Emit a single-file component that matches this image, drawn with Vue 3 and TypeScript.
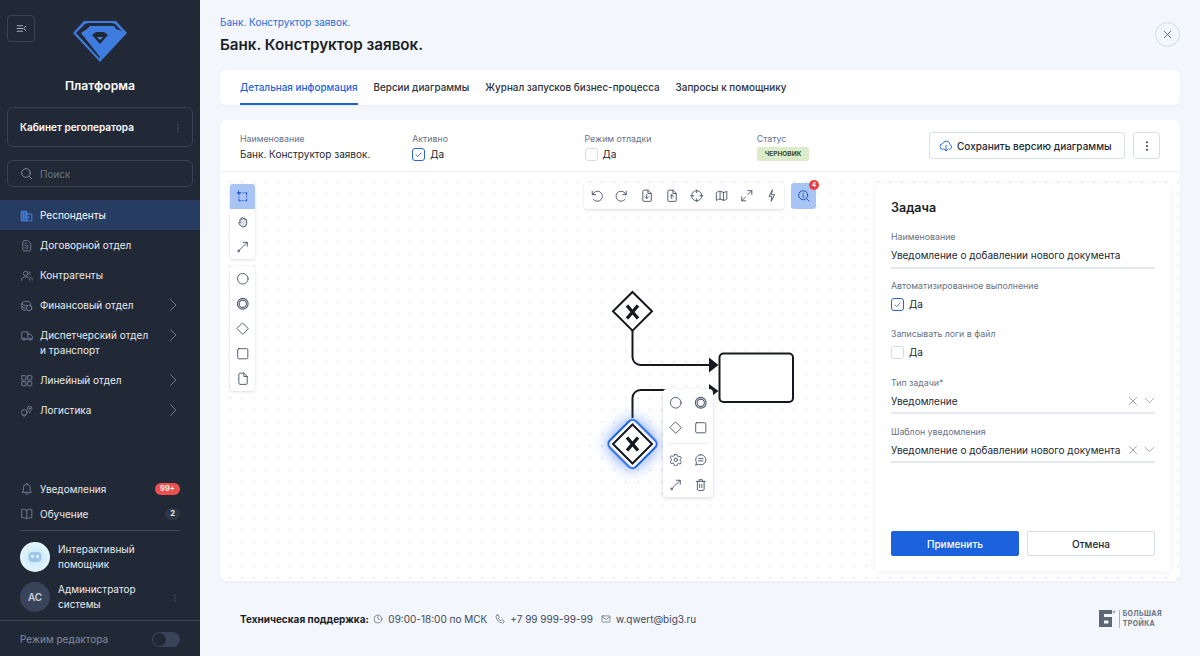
<template>
  <div class="app">
    <aside class="sidebar">
      <div class="brand">
        <button class="collapse">
          <svg class="ico" viewBox="0 0 24 24" v-html="icons.collapse"></svg>
        </button>
        <svg class="logo" viewBox="0 0 54 41">
          <path d="M0 12 11 0h32l11 12-27 29z" fill="#3f7ce0" />
          <path d="M3 12 12 3l3-1h24l3 1 7 7-6-2-2-3H17l-3 3-6 4 19 24-1 1z" fill="#222936" />
          <path d="M19 14l4-3h8l4 3-8 9z" fill="#222936" />
          <path d="M24 16h6l-3 3z" fill="#4a86e8" />
        </svg>
        <div class="brand-name">Платформа</div>
      </div>

      <div class="cabinet">
        <span>Кабинет регоператора</span>
        <svg class="ico dots" viewBox="0 0 24 24" v-html="icons.dots"></svg>
      </div>

      <div class="search">
        <svg class="ico" viewBox="0 0 24 24" v-html="icons.search"></svg>
        <span>Поиск</span>
      </div>

      <nav class="nav">
        <div v-for="item in navItems" :key="item.label" :class="['nav-item', { active: item.active }]">
          <svg class="ico" viewBox="0 0 24 24" v-html="icons[item.icon]"></svg>
          <span class="nav-label">{{ item.label }}</span>
          <svg v-if="item.arrow" class="ico chevron" viewBox="0 0 24 24" v-html="icons.chevron"></svg>
        </div>
      </nav>

      <div class="side-bottom">
        <div class="side-link">
          <svg class="ico" viewBox="0 0 24 24" v-html="icons.bell"></svg>
          <span>Уведомления</span>
          <b class="count red">99+</b>
        </div>
        <div class="side-link">
          <svg class="ico" viewBox="0 0 24 24" v-html="icons.book"></svg>
          <span>Обучение</span>
          <b class="count">2</b>
        </div>
        <div class="side-divider"></div>
        <div class="person">
          <div class="avatar helper">
            <svg viewBox="0 0 30 30" width="30" height="30">
              <rect x="8.5" y="10" width="13" height="10" rx="4" fill="#9fc6e6" />
              <circle cx="12.5" cy="14.5" r="1.4" fill="#eef8fd" />
              <circle cx="17.5" cy="14.5" r="1.4" fill="#eef8fd" />
            </svg>
          </div>
          <span>Интерактивный<br />помощник</span>
        </div>
        <div class="person">
          <div class="avatar">АС</div>
          <span>Администратор<br />системы</span>
          <svg class="ico dots" viewBox="0 0 24 24" v-html="icons.dots"></svg>
        </div>
      </div>

      <div class="editor-mode">
        <span>Режим редактора</span>
        <div class="switch"><i></i></div>
      </div>
    </aside>

    <main class="main">
      <header class="page-head">
        <div>
          <div class="crumb">Банк. Конструктор заявок.</div>
          <h1>Банк. Конструктор заявок.</h1>
        </div>
        <button class="close">
          <svg class="ico" viewBox="0 0 24 24" v-html="icons.close"></svg>
        </button>
      </header>

      <div class="tabs">
        <div v-for="(tab, i) in tabs" :key="tab" :class="['tab', { current: i === 0 }]">{{ tab }}</div>
      </div>

      <section class="card">
        <div class="info-row">
          <div class="field">
            <label>Наименование</label>
            <div class="value">Банк. Конструктор заявок.</div>
          </div>
          <div class="field">
            <label>Активно</label>
            <div class="value check"><i class="box on"><svg viewBox="0 0 14 14"><path d="M3.5 7.2 6 9.6l4.6-5" /></svg></i>Да</div>
          </div>
          <div class="field">
            <label>Режим отладки</label>
            <div class="value check"><i class="box"></i>Да</div>
          </div>
          <div class="field">
            <label>Статус</label>
            <div class="status">ЧЕРНОВИК</div>
          </div>
          <div class="info-actions">
            <button class="btn-save">
              <svg class="ico cloud" viewBox="0 0 24 24" v-html="icons.cloud"></svg>
              Сохранить версию диаграммы
            </button>
            <button class="btn-more">
              <svg class="ico" viewBox="0 0 24 24" v-html="icons.dotsDark"></svg>
            </button>
          </div>
        </div>

        <div class="canvas">
          <svg class="diagram" viewBox="220 172 960 409">
            <g fill="none" stroke="#15191f" stroke-width="2">
              <path d="M632.5 292 652 311.3 632.5 330.6 613 311.3z" fill="#fff" />
              <path d="M632.5 331V357a8 8 0 0 0 8 8H710" />
              <rect x="719.5" y="353.5" width="73.5" height="48.5" rx="4" fill="#fff" />
              <path d="M632.5 418V398a8 8 0 0 1 8-8H710" />
            </g>
            <path d="M627 305.5 638 318.5M638 305.5 627 318.5" stroke="#15191f" stroke-width="3.4" fill="none" />
            <path d="M709 357.5 718.5 365 709 372.5z" fill="#15191f" />
            <path d="M709 384 718.5 391 709 398z" fill="#15191f" />
            <rect class="selected" x="614" y="425.5" width="37" height="37" rx="5" transform="rotate(45 632.5 444)" />
            <path d="M632.5 424.5 652 444 632.5 463.5 613 444z" fill="#fff" stroke="#15191f" stroke-width="2" />
            <path d="M627 437.5 638 450.5M638 437.5 627 450.5" stroke="#15191f" stroke-width="3.4" fill="none" />
          </svg>

          <div class="tool-col">
            <div class="tool-group">
              <button v-for="(t, i) in toolsTop" :key="t" :class="['tool', { picked: i === 0 }]">
                <svg class="ico" viewBox="0 0 24 24" v-html="icons[t]"></svg>
              </button>
            </div>
            <div class="tool-group">
              <button v-for="t in toolsShapes" :key="t" class="tool">
                <svg class="ico" viewBox="0 0 24 24" v-html="icons[t]"></svg>
              </button>
            </div>
          </div>

          <div class="top-tools">
            <div class="tool-group row">
              <button v-for="t in toolsRow" :key="t" class="tool">
                <svg class="ico" viewBox="0 0 24 24" v-html="icons[t]"></svg>
              </button>
            </div>
            <button class="tool assistant">
              <svg class="ico" viewBox="0 0 24 24" v-html="icons.inspect"></svg>
              <b>4</b>
            </button>
          </div>

          <div class="context-menu">
            <button v-for="t in menuTop" :key="t" class="tool">
              <svg class="ico" viewBox="0 0 24 24" v-html="icons[t]"></svg>
            </button>
            <div class="menu-divider"></div>
            <button v-for="t in menuBottom" :key="t" class="tool">
              <svg class="ico" viewBox="0 0 24 24" v-html="icons[t]"></svg>
            </button>
          </div>

          <aside class="task">
            <h2>Задача</h2>
            <div class="task-field first">
              <label>Наименование</label>
              <div class="line">Уведомление о добавлении нового документа</div>
            </div>
            <div class="task-check">
              <label>Автоматизированное выполнение</label>
              <div class="value check"><i class="box on"><svg viewBox="0 0 14 14"><path d="M3.5 7.2 6 9.6l4.6-5" /></svg></i>Да</div>
            </div>
            <div class="task-check">
              <label>Записывать логи в файл</label>
              <div class="value check"><i class="box"></i>Да</div>
            </div>
            <div class="task-field select">
              <label>Тип задачи*</label>
              <div class="line">
                <span>Уведомление</span>
                <svg class="ico clear" viewBox="0 0 24 24" v-html="icons.close"></svg>
                <svg class="ico open" viewBox="0 0 24 24" v-html="icons.down"></svg>
              </div>
            </div>
            <div class="task-field select">
              <label>Шаблон уведомления</label>
              <div class="line">
                <span>Уведомление о добавлении нового документа</span>
                <svg class="ico clear" viewBox="0 0 24 24" v-html="icons.close"></svg>
                <svg class="ico open" viewBox="0 0 24 24" v-html="icons.down"></svg>
              </div>
            </div>
            <div class="task-actions">
              <button class="apply">Применить</button>
              <button class="cancel">Отмена</button>
            </div>
          </aside>
        </div>
      </section>

      <footer class="footer">
        <strong>Техническая поддержка:</strong>
        <span class="contact"><svg class="ico" viewBox="0 0 24 24" v-html="icons.clock"></svg>09:00-18:00 по МСК</span>
        <span class="contact"><svg class="ico" viewBox="0 0 24 24" v-html="icons.phone"></svg>+7 99 999-99-99</span>
        <span class="contact"><svg class="ico" viewBox="0 0 24 24" v-html="icons.mail"></svg>w.qwert@big3.ru</span>
        <div class="company">
          <svg viewBox="0 0 17 17" width="17" height="17">
            <path d="M0 0h13v4H5v3h8v10H0z" fill="#5d6675" />
            <path d="M5 10.5h4.5v3H5z" fill="#f3f6fa" />
            <circle cx="15" cy="1.8" r="1.5" fill="#aab2bd" />
          </svg>
          <i></i>
          <span>БОЛЬШАЯ<br />ТРОЙКА</span>
        </div>
      </footer>
    </main>
  </div>
</template>

<script setup lang="ts">
interface NavItem {
  label: string
  icon: string
  active?: boolean
  arrow?: boolean
}

const navItems: NavItem[] = [
  { label: 'Респонденты', icon: 'building', active: true },
  { label: 'Договорной отдел', icon: 'doc' },
  { label: 'Контрагенты', icon: 'users' },
  { label: 'Финансовый отдел', icon: 'finance', arrow: true },
  { label: 'Диспетчерский отдел и транспорт', icon: 'truck', arrow: true },
  { label: 'Линейный отдел', icon: 'grid', arrow: true },
  { label: 'Логистика', icon: 'route', arrow: true }
]

const tabs = ['Детальная информация', 'Версии диаграммы', 'Журнал запусков бизнес-процесса', 'Запросы к помощнику']

const toolsTop = ['select', 'hand', 'connect']
const toolsShapes = ['circle', 'ring', 'diamond', 'square', 'page']
const toolsRow = ['undo', 'redo', 'fileIn', 'fileOut', 'target', 'map', 'expand', 'bolt']
const menuTop = ['circle', 'ring', 'diamond', 'square']
const menuBottom = ['gear', 'chat', 'connect', 'trash']

const icons: Record<string, string> = {
  collapse: '<path d="M4 7h10M4 12h10M4 17h10M20 8l-4 4 4 4"/>',
  dots: '<circle cx="12" cy="6" r="1.2" fill="currentColor"/><circle cx="12" cy="12" r="1.2" fill="currentColor"/><circle cx="12" cy="18" r="1.2" fill="currentColor"/>',
  dotsDark: '<circle cx="12" cy="5.5" r="1.6" fill="currentColor"/><circle cx="12" cy="12" r="1.6" fill="currentColor"/><circle cx="12" cy="18.5" r="1.6" fill="currentColor"/>',
  search: '<circle cx="11" cy="11" r="8"/><path d="M17 17l4.5 4.5"/>',
  building: '<path d="M3 21V4h9v17M12 9h9v12H3M6 8v9M9 8v9M15.5 13v4"/><path d="M3 5h9v15H3z" fill="currentColor" fill-opacity=".35"/>',
  doc: '<path d="M5 5a2 2 0 0 1 2-2h7l5 5v11a2 2 0 0 1-2 2H7a2 2 0 0 1-2-2zM9 12h6M9 16h6M9 8h2"/>',
  users: '<circle cx="10" cy="8" r="4"/><path d="M2.5 20c0-4 3-6 7.5-6s7.5 2 7.5 6M16 4.5a4 4 0 0 1 0 7M19 14.5c1.8.8 2.8 2.5 2.8 5"/>',
  finance: '<path d="M3 8c0-2 4-4 8-4s8 2 8 4v3M3 8v9c0 1.5 3 3 7 3M3 8c0 2 4 3.5 8 3.5M3 13c0 1.5 3 3 6 3"/><circle cx="16" cy="16" r="5"/>',
  truck: '<path d="M5 18H3V7a2 2 0 0 1 2-2h9v13H9M14 9h4l4 4v5h-2M15 18h1"/><circle cx="7" cy="18" r="2"/><circle cx="18" cy="18" r="2"/>',
  grid: '<rect x="3" y="3" width="7.5" height="7.5" rx="1"/><rect x="13.5" y="3" width="7.5" height="7.5" rx="1"/><rect x="3" y="13.5" width="7.5" height="7.5" rx="1"/><rect x="13.5" y="13.5" width="7.5" height="7.5" rx="1"/>',
  route: '<path d="M17 15c-2.5-3-4-5-4-7a4 4 0 0 1 8 0c0 2-1.5 4-4 7z"/><circle cx="17" cy="8" r="1"/><circle cx="7.5" cy="15" r="5"/><path d="M4.5 19.5 7.5 22l3-2.5"/>',
  chevron: '<path d="M8 3l9 9-9 9"/>',
  bell: '<path d="M6 16V10a6 6 0 0 1 12 0v6l2 2.5H4zM10 21.5h4M12 2.5V4"/>',
  book: '<path d="M12 6c-2-1.5-5-2-9-2v15c4 0 7 .5 9 2 2-1.5 5-2 9-2V4c-4 0-7 .5-9 2zM12 6v15"/>',
  close: '<path d="M6 6l12 12M18 6 6 18"/>',
  down: '<path d="M4 8l8 8 8-8"/>',
  cloud: '<path d="M7 18a5 5 0 0 1-.5-10 6.5 6.5 0 0 1 12.500 1.500 4.500 4.500 0 0 1-1 8.500"/><path d="M12 11v9M8.500 17l3.500 3.500 3.500-3.500"/>',
  select: '<path d="M5 8V5h3M16 5h3v3M19 16v3h-3M8 19H5v-3M12 5h1M5 12v1M19 11v1M11 19h1M2 5h6M5 2v6"/>',
  hand: '<path d="M7 13V8a1.500 1.500 0 0 1 3 0V6a1.500 1.500 0 0 1 3 0v1a1.500 1.500 0 0 1 3 0v2a1.500 1.500 0 0 1 3 0v6a6 6 0 0 1-6 6h-1c-3 0-4-2-7-6a1.500 1.500 0 0 1 2-2z" fill="currentColor" fill-opacity=".18"/>',
  connect: '<path d="M5.500 18.500 20 4M13 4h7v7"/><circle cx="4.500" cy="19.500" r="1.500"/>',
  circle: '<circle cx="12" cy="12" r="9.5"/>',
  ring: '<circle cx="12" cy="12" r="9.5" stroke-width="2"/><circle cx="12" cy="12" r="6.5" stroke-width="2"/>',
  diamond: '<path d="M12 2l10 10-10 10L2 12z"/>',
  square: '<rect x="3" y="3" width="18" height="18" rx="2"/>',
  page: '<path d="M5 4a2 2 0 0 1 2-2h7l6 6v12a2 2 0 0 1-2 2H7a2 2 0 0 1-2-2z"/><path d="M14 2v6h6"/>',
  undo: '<path d="M4 4v6h6"/><path d="M4.500 10A9 9 0 1 1 6 18.500"/>',
  redo: '<path d="M20 4v6h-6"/><path d="M19.500 10A9 9 0 1 0 18 18.500"/>',
  fileIn: '<path d="M5 4a2 2 0 0 1 2-2h7l6 6v12a2 2 0 0 1-2 2H7a2 2 0 0 1-2-2zM14 2v6h6M12 10v7M9 14l3 3 3-3"/>',
  fileOut: '<path d="M5 4a2 2 0 0 1 2-2h7l6 6v12a2 2 0 0 1-2 2H7a2 2 0 0 1-2-2zM14 2v6h6M12 17v-7M9 13l3-3 3 3"/>',
  target: '<circle cx="12" cy="12" r="9"/><path d="M12 1.500v5M12 17.500v5M1.500 12h5M17.500 12h5"/>',
  map: '<path d="M3 6c2-1.500 4-2 6-2l6 2c2 0 4-.5 6-2v14c-2 1.500-4 2-6 2l-6-2c-2 0-4 .5-6 2zM9 4v14M15 6v14"/>',
  expand: '<path d="M14 3h7v7M21 3l-7 7M10 21H3v-7M3 21l7-7"/>',
  bolt: '<path d="M13 2 7 13h5l-1 9 6-12h-5z"/>',
  inspect: '<circle cx="11" cy="11" r="8"/><path d="M17 17l4.500 4.500M11 10.500V15M11 7.500v.5"/>',
  gear: '<circle cx="12" cy="12" r="3"/><path d="M10 2.500h4l.7 3 2.300 1.300 3-.9 2 3.500-2.200 2.100v2.600l2.200 2.100-2 3.500-3-.9-2.300 1.300-.7 3h-4l-.7-3L7 17.900l-3 .9-2-3.500 2.200-2.100v-2.600L2 8.500l2-3.500 3 .9 2.300-1.300z"/>',
  chat: '<path d="M12 3a9 9 0 1 1-4 17l-5 1.500L4.500 17A9 9 0 0 1 12 3zM8 10h8M8 14h8"/>',
  trash: '<path d="M4 6h16M9 6V3h6v3M6 6v14a2 2 0 0 0 2 2h8a2 2 0 0 0 2-2V6M10 11v6M14 11v6"/>',
  clock: '<circle cx="12" cy="12" r="9.5"/><path d="M12 6v6l4 2"/>',
  phone: '<path d="M5 2.500 8.500 3l1.500 5-2 2c1.200 2.800 3.200 4.800 6 6l2-2 5 1.500.5 3.500c-.5 1.500-2 2.500-3.500 2.500C9.500 21 3 14.500 2.500 6 2.500 4.500 3.500 3 5 2.500z"/>',
  mail: '<rect x="2.5" y="4.5" width="19" height="15" rx="2"/><path d="M3 7l9 6 9-6"/>'
}
</script>

<style scoped>
.app {
  display: grid;
  grid-template-columns: 200px 1fr;
  height: 656px;
  overflow: hidden;
  background: #f3f6fa;
  font-family: Inter, "Noto Sans", sans-serif;
  color: #1f2530;
}

button {
  font-family: inherit;
  cursor: pointer;
}

.ico {
  display: block;
  width: 16px;
  height: 16px;
  fill: none;
  stroke: currentColor;
  stroke-width: 1.6;
  stroke-linecap: round;
  stroke-linejoin: round;
  flex-shrink: 0;
}

/* sidebar */
.sidebar {
  display: flex;
  flex-direction: column;
  background: #222936;
  color: #fff;
  height: 656px;
}

.brand {
  position: relative;
  display: flex;
  flex-direction: column;
  align-items: center;
  padding-top: 21px;
  height: 107px;
  box-sizing: border-box;
}

.collapse {
  position: absolute;
  left: 7px;
  top: 15px;
  width: 28px;
  height: 27px;
  padding: 0;
  display: flex;
  align-items: center;
  justify-content: center;
  background: transparent;
  border: 1px solid #3a4353;
  border-radius: 4px;
  color: #c3cad6;
}

.collapse .ico {
  width: 13px;
  height: 13px;
}

.logo {
  width: 54px;
  height: 41px;
}

.brand-name {
  margin-top: 16px;
  font-size: 12.2px;
  line-height: 16px;
  font-weight: 600;
}

.cabinet {
  display: flex;
  align-items: center;
  justify-content: space-between;
  margin: 0 7px;
  height: 40px;
  padding: 0 8px 0 12px;
  box-sizing: border-box;
  border: 1px solid #3a4353;
  border-radius: 6px;
  font-size: 10px;
  font-weight: 600;
}

.cabinet .dots,
.person .dots {
  width: 12px;
  height: 12px;
  color: #79849a;
  stroke: none;
  margin-top: 2px;
}

.search {
  display: flex;
  align-items: center;
  gap: 7px;
  margin: 13px 7px;
  height: 27px;
  padding: 0 12px;
  box-sizing: border-box;
  border: 1px solid #3a4353;
  border-radius: 6px;
  font-size: 10px;
  color: #6b7587;
}

.search .ico {
  width: 13px;
  height: 13px;
  color: #8a94a6;
}

.nav-item {
  display: flex;
  align-items: flex-start;
  gap: 6.5px;
  padding: 8px 20px 7px 20px;
  min-height: 30px;
  box-sizing: border-box;
  font-size: 10px;
  line-height: 15px;
  color: #e8ebf0;
}

.nav-item .ico {
  width: 13.5px;
  height: 13.5px;
  margin-top: 1px;
  color: #75819a;
  stroke-width: 1.6;
}

.nav-item.active {
  background: #273c61;
  color: #fff;
}

.nav-item.active .ico {
  color: #4a86e8;
}

.nav-label {
  flex: 1;
  max-width: 116px;
}

.nav-item .chevron {
  margin-left: auto;
  width: 14px;
  height: 14px;
  margin-top: 0;
}

.side-bottom {
  margin-top: auto;
  padding: 0 20px;
}

.side-link {
  display: flex;
  align-items: center;
  gap: 6.5px;
  height: 25px;
  font-size: 10px;
  color: #e8ebf0;
}

.side-link .ico {
  width: 13.5px;
  height: 13.5px;
  color: #75819a;
}

.count {
  margin-left: auto;
  min-width: 15px;
  height: 12px;
  border-radius: 6px;
  background: #2f3746;
  font-size: 7.5px;
  line-height: 12px;
  text-align: center;
  font-weight: 700;
}

.count.red {
  width: 25px;
  background: #ee5050;
}

.side-divider {
  height: 1px;
  background: #3d4656;
  margin: 4px 0 11px;
}

.person {
  display: flex;
  align-items: center;
  gap: 8px;
  height: 30px;
  margin-bottom: 10px;
  font-size: 10px;
  line-height: 15px;
  color: #e8ebf0;
}

.person:last-child {
  margin-bottom: 8px;
}

.person .dots {
  margin-left: auto;
  margin-right: -1px;
}

.avatar {
  width: 30px;
  height: 30px;
  border-radius: 50%;
  background: #39445a;
  display: flex;
  align-items: center;
  justify-content: center;
  font-size: 10px;
  font-weight: 600;
  color: #c7cedb;
  flex-shrink: 0;
}

.avatar.helper {
  background: radial-gradient(circle, #bfe6f7 0%, #dff3fb 60%, #f4fbfe 100%);
}

.editor-mode {
  display: flex;
  align-items: center;
  justify-content: space-between;
  height: 36px;
  padding: 1px 20px 0;
  box-sizing: border-box;
  border-top: 1px solid #3d4656;
  font-size: 10px;
  color: #818b9e;
}

.switch {
  position: relative;
  width: 28px;
  height: 15px;
  border-radius: 8px;
  background: #39445a;
}

.switch i {
  position: absolute;
  left: 1px;
  top: 1px;
  width: 13px;
  height: 13px;
  border-radius: 50%;
  background: #222936;
}

/* main */
.main {
  display: flex;
  flex-direction: column;
  padding: 0 20px;
  min-width: 0;
}

.page-head {
  display: flex;
  justify-content: space-between;
  height: 70px;
  padding-top: 16px;
  box-sizing: border-box;
}

.crumb {
  font-size: 10px;
  line-height: 13px;
  color: #2a6bd8;
}

h1 {
  margin: 7px 0 0;
  font-size: 15.2px;
  line-height: 18px;
  font-weight: 600;
  color: #191e27;
}

.close {
  width: 25px;
  height: 25px;
  margin-top: 6px;
  padding: 0;
  display: flex;
  align-items: center;
  justify-content: center;
  background: transparent;
  border: 1px solid #d4dbe5;
  border-radius: 50%;
  color: #4d5769;
}

.close .ico {
  width: 13px;
  height: 13px;
}

.tabs {
  display: flex;
  gap: 16px;
  height: 35px;
  padding: 0 20px;
  background: #fff;
  border-radius: 6px;
  box-shadow: 0 1px 3px rgba(40, 60, 100, 0.05);
}

.tab {
  display: flex;
  align-items: center;
  font-size: 9.9px;
  font-weight: 500;
  color: #2b3240;
  border-bottom: 2px solid transparent;
}

.tab.current {
  color: #1c62dc;
  border-bottom-color: #1c62dc;
}

.card {
  display: flex;
  flex-direction: column;
  margin-top: 15px;
  height: 461px;
  background: #fff;
  border-radius: 6px;
  box-shadow: 0 1px 3px rgba(40, 60, 100, 0.05);
}

.info-row {
  display: flex;
  align-items: flex-start;
  height: 52px;
  padding: 13px 20px 0;
  box-sizing: border-box;
  border-bottom: 1px solid #edf1f6;
}

.field {
  width: 172.5px;
}

label {
  display: block;
  font-size: 8.8px;
  line-height: 12px;
  color: #687285;
}

.value {
  font-size: 10px;
  line-height: 16px;
  color: #222833;
}

.field .value {
  margin-top: 1px;
}

.check {
  display: flex;
  align-items: center;
  gap: 5px;
}

.box {
  display: block;
  width: 13px;
  height: 13px;
  box-sizing: border-box;
  border: 1px solid #d6dce6;
  border-radius: 3px;
}

.box.on {
  border-color: #2c62d6;
}

.box svg {
  display: block;
  width: 11px;
  height: 11px;
  fill: none;
  stroke: #2c62d6;
  stroke-width: 1.1;
}

.status {
  width: fit-content;
  margin-top: 2px;
  padding: 0 8px;
  height: 14px;
  line-height: 14px;
  border-radius: 2px;
  background: #dcebc8;
  font-size: 6.5px;
  font-weight: 700;
  color: #3c4a32;
}

.info-actions {
  display: flex;
  gap: 8px;
  margin: -1px 0 0 auto;
}

.btn-save,
.btn-more {
  display: flex;
  align-items: center;
  height: 27px;
  background: #fff;
  border: 1px solid #d8dfe9;
  border-radius: 3px;
  font-size: 10px;
  font-weight: 500;
  color: #222833;
}

.btn-save {
  width: 196px;
  gap: 4px;
  padding: 0 0 0 9px;
}

.btn-save .cloud {
  width: 14px;
  height: 14px;
  color: #1c62dc;
}

.btn-more {
  width: 27px;
  padding: 0;
  justify-content: center;
}

.btn-more .ico {
  width: 14px;
  height: 14px;
  stroke: none;
}

.canvas {
  position: relative;
  flex: 1;
  overflow: hidden;
  background-color: #fff;
  background-image: radial-gradient(circle, #e8ebf1 0.7px, transparent 1px);
  background-size: 12px 12px;
  background-position: 4px 4px;
  border-radius: 0 0 6px 6px;
}

.diagram {
  position: absolute;
  left: 0;
  top: 0;
  width: 960px;
  height: 409px;
}

.selected {
  fill: #fff;
  stroke: #1c62dc;
  stroke-width: 2;
  filter: drop-shadow(0 0 8px rgba(50, 110, 240, 0.7));
}

.tool-col {
  position: absolute;
  left: 10px;
  top: 12px;
  display: flex;
  flex-direction: column;
  gap: 7px;
}

.tool-group {
  display: flex;
  flex-direction: column;
  width: 25px;
  background: #fff;
  border-radius: 3px;
  box-shadow: 0 1px 3px rgba(40, 55, 90, 0.18);
  overflow: hidden;
}

.tool-group.row {
  flex-direction: row;
  width: auto;
}

.tool {
  width: 25px;
  height: 25px;
  padding: 0;
  display: flex;
  align-items: center;
  justify-content: center;
  background: transparent;
  border: 0;
  color: #4e5a70;
}

.tool .ico {
  width: 13.5px;
  height: 13.5px;
  stroke-width: 1.7;
}

.tool.picked {
  background: #a8c4f5;
  color: #1c50c4;
}

.top-tools {
  position: absolute;
  left: 364px;
  top: 11px;
  display: flex;
  gap: 7px;
}

.top-tools .tool {
  height: 26px;
}

.assistant {
  position: relative;
  background: #a8c4f5;
  border-radius: 3px;
  color: #1c4eb8;
}

.assistant b {
  position: absolute;
  right: -3px;
  top: -3px;
  width: 10px;
  height: 10px;
  border-radius: 50%;
  background: #ee4040;
  font-size: 6px;
  line-height: 10px;
  color: #fff;
  text-align: center;
}

.context-menu {
  position: absolute;
  left: 443px;
  top: 217px;
  width: 50px;
  height: 108px;
  display: grid;
  grid-template-columns: 25px 25px;
  align-content: start;
  padding-top: 1px;
  box-sizing: border-box;
  background: #fff;
  border-radius: 4px;
  box-shadow: 0 1px 4px rgba(40, 55, 90, 0.2);
}

.menu-divider {
  grid-column: 1 / -1;
  height: 1px;
  margin: 3px 5px;
  background: #e8edf4;
}

.task {
  position: absolute;
  left: 656px;
  top: 11px;
  width: 294px;
  height: 388px;
  display: flex;
  flex-direction: column;
  padding: 17px 15px 15px;
  box-sizing: border-box;
  background: #fff;
  box-shadow: 0 2px 8px rgba(40, 60, 100, 0.07);
}

h2 {
  margin: 0;
  font-size: 12.5px;
  line-height: 15px;
  font-weight: 600;
  color: #191e27;
}

.task-field.first {
  margin-top: 16px;
}

.line {
  display: flex;
  align-items: center;
  height: 24px;
  font-size: 10px;
  color: #222833;
  border-bottom: 2px solid #e4e9f1;
}

.line span {
  flex: 1;
  white-space: nowrap;
}

.task-check {
  margin-top: 11px;
}

.task-check + .task-check {
  margin-top: 16px;
}

.task-check .value {
  margin-top: 4px;
}

.task-field.select {
  margin-top: 17px;
}

.task-field.select .line {
  height: 23px;
}

.task-field.select + .task-field.select {
  margin-top: 12px;
}

.ico.clear {
  width: 14px;
  height: 14px;
  margin-right: 3px;
  color: #7d8799;
  stroke-width: 1.3;
}

.ico.open {
  width: 13px;
  height: 13px;
  margin-right: -1px;
  color: #7d8799;
  stroke-width: 1.3;
}

.task-actions {
  display: flex;
  gap: 8px;
  margin-top: auto;
}

.apply,
.cancel {
  flex: 1;
  height: 25px;
  padding: 0;
  border-radius: 2px;
  font-size: 10px;
  font-weight: 500;
}

.apply {
  background: #1c62dc;
  border: 1px solid #1c62dc;
  color: #fff;
}

.cancel {
  background: #fff;
  border: 1px solid #d8dfe9;
  color: #222833;
}

.footer {
  display: flex;
  align-items: center;
  gap: 8px;
  height: 75px;
  font-size: 10px;
  color: #3f4757;
  padding-left: 20px;
}

.footer strong {
  font-weight: 700;
  color: #191e27;
  margin-right: -3.5px;
}

.contact {
  display: flex;
  align-items: center;
  gap: 5px;
}

.contact .ico {
  width: 10px;
  height: 10px;
  color: #5a6475;
  stroke-width: 1.7;
}

.company {
  display: flex;
  align-items: center;
  gap: 3px;
  margin-left: auto;
  margin-right: 18px;
  font-size: 7px;
  line-height: 9.5px;
  font-weight: 700;
  letter-spacing: 0.4px;
  color: #687080;
}

.company i {
  width: 1px;
  height: 18px;
  background: #aab2bd;
}
</style>
